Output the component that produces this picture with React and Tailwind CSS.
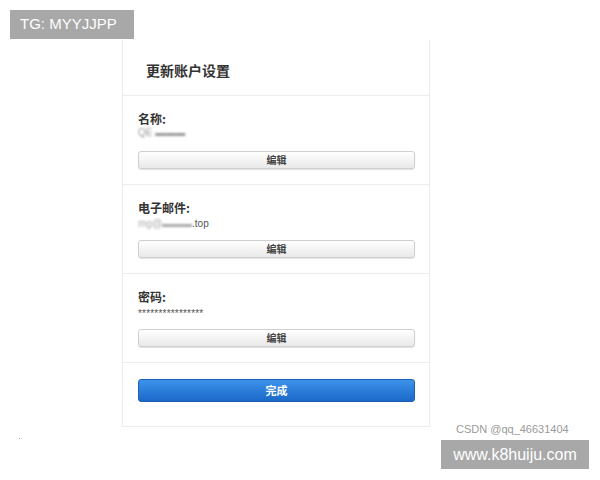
export default function App() {
  const cjk = { fontFamily: '"Noto Sans CJK SC", "Noto Sans", sans-serif' }
  const latin = { fontFamily: '"Liberation Sans", Arial, sans-serif' }

  const EditButton = () => (
    <button className="block w-[277px] h-[18px] rounded-[3px] border border-[#cfcfcf] bg-gradient-to-b from-white to-[#e9e9e9] shadow-[0_1px_1px_rgba(0,0,0,0.12)] text-[10px] leading-[16px] font-bold text-[#444]">
      编辑
    </button>
  )

  return (
    <div className="relative w-[600px] h-[480px] bg-white overflow-hidden" style={cjk}>
      <div className="ml-[122px] pt-[40px] w-[308px]">
        <div className="border-x border-b border-[#ececec]">
          <div className="h-[56px] pl-[23px] flex items-center pt-[5px] border-b border-[#ececec]">
            <h1 className="text-[14px] font-bold text-[#333]">更新账户设置</h1>
          </div>

          <div className="pl-[15px] pt-[16px] pb-[15px] border-b border-[#ececec]">
            <p className="text-[12px] leading-[14px] font-bold text-[#333]">名称:</p>
            <p className="mt-[1px] text-[10px] leading-[12px] text-[#999] blur-[1.2px]" style={latin}>QE ▬▬▬</p>
            <div className="mt-[12px] flex"><EditButton /></div>
          </div>

          <div className="pl-[15px] pt-[16px] pb-[15px] border-b border-[#ececec]">
            <p className="text-[12px] leading-[14px] font-bold text-[#333]">电子邮件:</p>
            <p className="mt-[3px] text-[10px] leading-[12px] text-[#555] flex" style={latin}>
              <span className="blur-[1.2px] text-[#aaa]">mg@▬▬▬</span>
              <span>.top</span>
            </p>
            <div className="mt-[10px] flex"><EditButton /></div>
          </div>

          <div className="pl-[15px] pt-[16px] pb-[15px] border-b border-[#ececec]">
            <p className="text-[12px] leading-[14px] font-bold text-[#333]">密码:</p>
            <p className="mt-[4px] text-[10px] leading-[12px] text-[#555] tracking-[0.2px]" style={latin}>****************</p>
            <div className="mt-[9px] flex"><EditButton /></div>
          </div>

          <div className="pl-[15px] pt-[16px] pb-[24px] flex">
            <button className="block w-[277px] h-[23px] rounded-[3px] border border-[#1d5fb3] bg-gradient-to-b from-[#3d93ea] to-[#1b68c9] text-[11px] font-bold text-white">
              完成
            </button>
          </div>
        </div>
      </div>

      <div
        className="absolute left-[10px] top-[10px] w-[124px] h-[29px] bg-[#a8a8a8] text-white text-[15px] flex items-center pl-[10px]"
        style={latin}
      >
        TG: MYYJJPP
      </div>

      <div className="absolute left-[456px] top-[421px] text-[11px] text-[#9a9a9a]" style={latin}>
        CSDN @qq_46631404
      </div>

      <div
        className="absolute left-[441px] top-[440px] w-[148px] h-[29px] bg-[#a8a8a8] text-white text-[16px] flex items-center justify-center"
        style={latin}
      >
        www.k8huiju.com
      </div>

      <div className="absolute left-[19px] top-[438px] w-[1px] h-[1px] bg-[#999]" />
    </div>
  )
}
